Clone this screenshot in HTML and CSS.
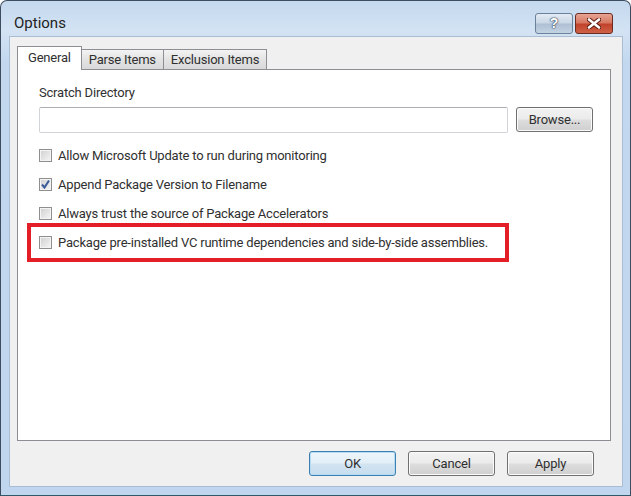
FILE: index.html
```html
<!DOCTYPE html>
<html lang="en">
<head>
    <meta charset="UTF-8">
    <title>Options</title>
    <link rel="stylesheet" href="styles.css">
</head>
<body>
    <div class="window">
        <div class="titlebar">
            <span class="title">Options</span>
            <div class="caption-buttons">
                <button class="cap help">?</button>
                <button class="cap close">
                    <svg width="14" height="11" viewBox="0 0 14 11">
                        <path d="M2 1.5 L12 9.5 M12 1.5 L2 9.5" stroke="#5a1d12" stroke-width="4.5" stroke-linecap="round"/>
                        <path d="M2 1.5 L12 9.5 M12 1.5 L2 9.5" stroke="#fff" stroke-width="2.6" stroke-linecap="round"/>
                    </svg>
                </button>
            </div>
        </div>

        <div class="client">
            <div class="tabs">
                <div class="tab active">General</div>
                <div class="tab">Parse Items</div>
                <div class="tab">Exclusion Items</div>
            </div>

            <div class="panel">
                <div class="label">Scratch Directory</div>
                <div class="dir-row">
                    <div class="textbox"></div>
                    <button class="btn browse">Browse...</button>
                </div>

                <label class="check-row first">
                    <span class="checkbox"></span>
                    Allow Microsoft Update to run during monitoring
                </label>
                <label class="check-row">
                    <span class="checkbox">
                        <svg width="11" height="11" viewBox="0 0 11 11">
                            <path d="M2 5.5 L4.5 8.5 L9 1.5" fill="none" stroke="#3b5a9a" stroke-width="2"/>
                        </svg>
                    </span>
                    Append Package Version to Filename
                </label>
                <label class="check-row">
                    <span class="checkbox"></span>
                    Always trust the source of Package Accelerators
                </label>

                <div class="highlight">
                    <label class="check-row">
                        <span class="checkbox"></span>
                        Package pre-installed VC runtime dependencies and side-by-side assemblies.
                    </label>
                </div>
            </div>

            <div class="dialog-buttons">
                <button class="btn default">OK</button>
                <button class="btn">Cancel</button>
                <button class="btn">Apply</button>
            </div>
        </div>
    </div>
</body>
</html>
```

FILE: styles.css
```css
body {
    margin: 0;
    background-color: #ffffff;
    font-family: Roboto, "Liberation Sans", sans-serif;
    font-size: 13px;
    letter-spacing: -0.2px;
    color: #303030;
}

.window {
    width: 631px;
    height: 496px;
    box-sizing: border-box;
    border: 1px solid #3d4d5f;
    border-bottom-color: #2f5a68;
    border-radius: 7px 7px 0 0;
    background: linear-gradient(to bottom, #c4d8ee 0px, #d3e3f3 30px, #c3d8ef 60px, #c0d6ee 100%);
    padding: 0 7px 8px 8px;
    display: flex;
    flex-direction: column;
}

.titlebar {
    height: 35px;
    box-sizing: border-box;
    padding: 9px 10px 0 5px;
    display: flex;
    align-items: center;
    justify-content: space-between;
}

.title {
    font-size: 15px;
    letter-spacing: 0;
    color: #222222;
}

.caption-buttons {
    display: flex;
    gap: 2px;
}

.cap {
    height: 21px;
    border-radius: 3px;
    padding: 0;
    display: flex;
    align-items: center;
    justify-content: center;
}

.cap.help {
    width: 38px;
    border: 1px solid #6c819a;
    background: linear-gradient(to bottom, #e3ebf4 0%, #c9d6e5 48%, #aebfd3 52%, #c3d3e4 100%);
    color: #ffffff;
    font-family: "Liberation Sans", sans-serif;
    font-weight: bold;
    font-size: 14px;
    text-shadow: 0 0 1px #33465c, 0 0 1px #33465c, 0 0 2px #33465c;
}

.cap.close {
    width: 38px;
    border: 1px solid #6a2c22;
    background: linear-gradient(to bottom, #e7a594 0%, #d77963 45%, #c1432b 55%, #cf6247 100%);
}

.client {
    flex-grow: 1;
    background-color: #f0f0f0;
    border: 1px solid #a9bdd4;
    padding: 9px 11px 0 7px;
    display: flex;
    flex-direction: column;
}

.tabs {
    display: flex;
    align-items: flex-end;
    height: 23px;
    position: relative;
    z-index: 1;
}

.tab {
    height: 20px;
    box-sizing: border-box;
    padding: 0 7px;
    border: 1px solid #8c8e94;
    border-bottom: none;
    border-left: none;
    background: linear-gradient(to bottom, #f3f3f3, #e3e3e3 50%, #d9d9d9);
    line-height: 20px;
}

.tab.active {
    height: 24px;
    margin-bottom: -1px;
    border-left: 1px solid #8c8e94;
    background: #ffffff;
    padding: 0 10px;
    line-height: 22px;
}

.panel {
    flex-grow: 1;
    background-color: #ffffff;
    border: 1px solid #8c8e94;
    padding: 15px 17px 0 21px;
}

.label {
    line-height: 16px;
}

.dir-row {
    margin-top: 6px;
    display: flex;
    gap: 8px;
}

.textbox {
    flex-grow: 1;
    height: 26px;
    box-sizing: border-box;
    border: 1px solid #d0d4d9;
    border-top-color: #abadb3;
    border-radius: 2px;
    background: #ffffff;
}

.btn {
    height: 25px;
    width: 87px;
    border: 1px solid #707070;
    border-radius: 3px;
    background: linear-gradient(to bottom, #f3f3f3 0%, #ebebeb 48%, #dddddd 52%, #cfcfcf 100%);
    box-shadow: inset 0 0 0 1px #fbfbfb;
    font-family: inherit;
    font-size: 13px;
    letter-spacing: -0.2px;
    color: #303030;
    padding: 0;
}

.btn.browse {
    width: 77px;
}

.btn.default {
    border-color: #3c7fb1;
    box-shadow: inset 0 0 0 1px #b6dcf3;
    background: linear-gradient(to bottom, #eef6fb 0%, #e2eef7 48%, #d2e4f1 52%, #c6dcee 100%);
}

.check-row {
    display: flex;
    align-items: center;
    gap: 6px;
    height: 17px;
    margin-top: 12px;
    white-space: nowrap;
}

.check-row.first {
    margin-top: 14px;
}

.checkbox {
    width: 13px;
    height: 13px;
    flex-shrink: 0;
    box-sizing: border-box;
    border: 1px solid #8e8f8f;
    background: linear-gradient(135deg, #cfcfcf, #f6f6f6);
    box-shadow: inset 0 0 0 1px #f4f4f4;
    display: flex;
    align-items: center;
    justify-content: center;
}

.highlight {
    width: 482px;
    box-sizing: border-box;
    margin: 1px 0 0 -12px;
    border: 4px solid #e41e26;
    padding: 7px 8px;
}

.highlight .check-row {
    margin-top: 0;
}

.dialog-buttons {
    display: flex;
    justify-content: flex-end;
    gap: 12px;
    padding: 10px 17px 10px 0;
}
```
